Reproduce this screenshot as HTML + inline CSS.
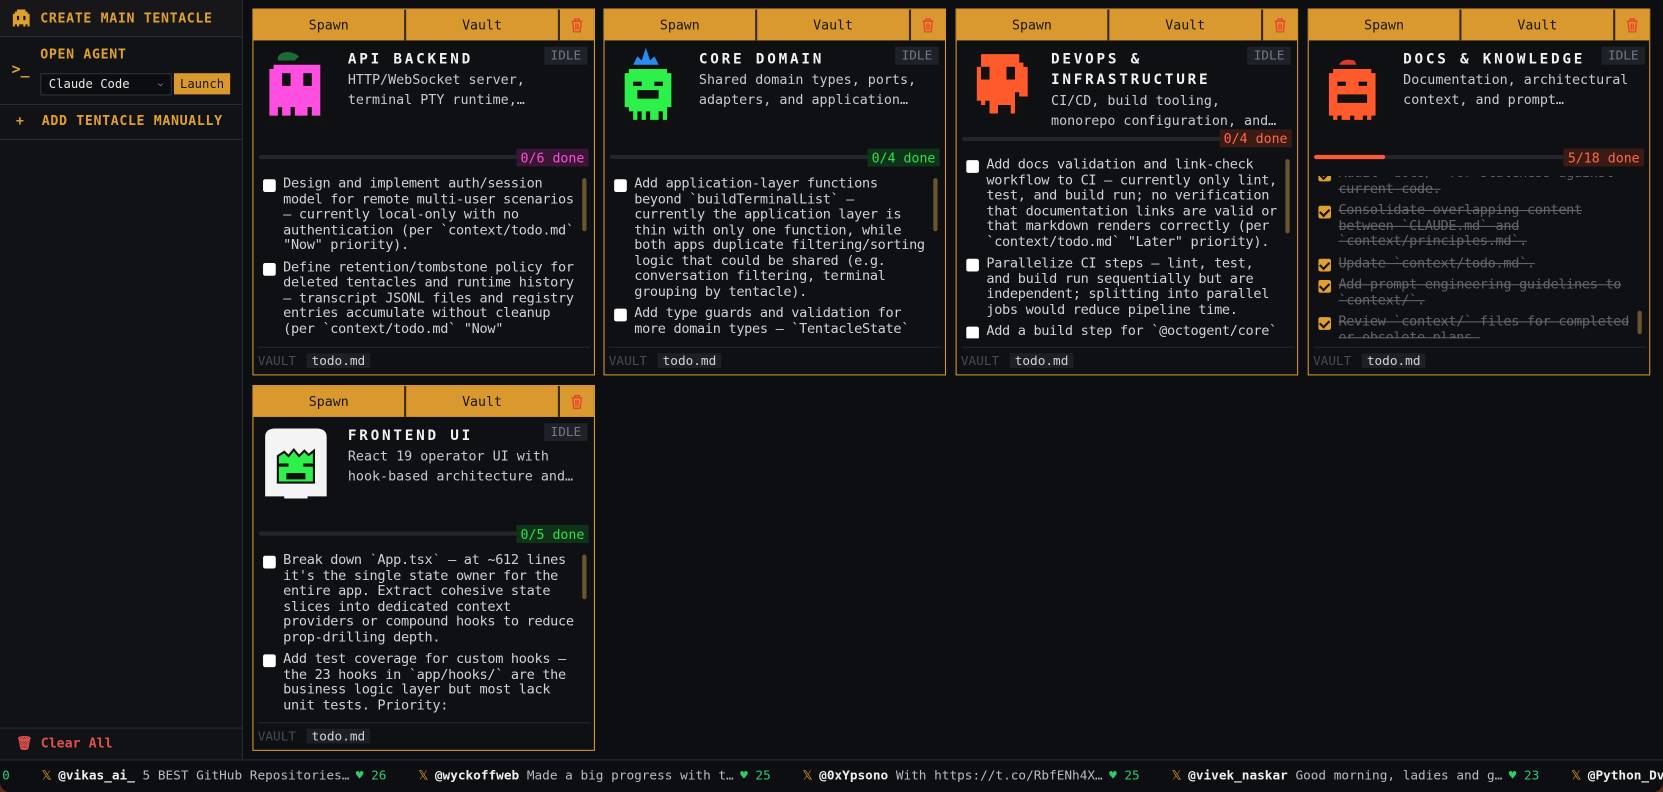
<!DOCTYPE html>
<html><head><meta charset="utf-8"><style>
*{box-sizing:border-box;margin:0;padding:0}
html,body{width:1663px;height:792px;overflow:hidden;background:#5a2a1c}
#w{position:absolute;left:0;top:0;width:1568px;height:747px;transform:scale(1.06058);transform-origin:0 0;background:#0d0e11;font-family:"DejaVu Sans Mono","Liberation Mono",monospace;color:#d0d2d6;overflow:hidden;border-radius:0 0 10px 10px}
.sb{position:absolute;left:0;top:0;width:229px;height:716px;background:#101216;border-right:1px solid #2a2d33}
.or{color:#e0a030;font-weight:bold;font-size:12.5px;letter-spacing:.6px}
.sep{position:absolute;left:0;width:228px;height:1px;background:#2a2d33}
.card{position:absolute;width:323px;border:1px solid #d8982e;background:#0f1014}
.hd{position:absolute;left:0;top:0;right:0;height:29px;background:#d9992f;display:flex;border-bottom:1px solid #d8982e}
.hd div{height:29px;line-height:29px;text-align:center;color:#1a1710;font-size:12.5px}
.hd .a{width:144px;border-right:2px solid #3a2a10}
.hd .b{width:145px;border-right:2px solid #3a2a10}
.hd .c{flex:1;display:flex;align-items:center;justify-content:center}
.sp{position:absolute;left:7px;top:36px}
.tt{position:absolute;left:89px;top:38px;color:#f2f2f2;font-family:"DejaVu Sans Mono",monospace;font-weight:bold;font-size:13.5px;letter-spacing:2.6px;line-height:19px}
.ds{position:absolute;left:89px;font-size:12.6px;line-height:19px;color:#c8cacd;width:228px}
.idle{position:absolute;right:6px;top:35px;background:#1e2228;color:#737982;font-size:12px;padding:1px 6px;line-height:15px}
.pb{position:absolute;left:5px;width:248px;height:4px;background:#22252b;border-radius:2px}
.bd{position:absolute;right:5px;font-size:12.5px;padding:0 4px;line-height:17px}
.ls{position:absolute;left:9px;right:2px;overflow:hidden;font-size:12.8px;letter-spacing:-0.3px;line-height:14.5px;color:#d0d2d6}
.it{display:flex;margin-bottom:6px}
.it>div:last-child{width:280px;flex:none}
.cb{flex:none;width:12px;height:12px;background:#fff;border-radius:2px;margin:2px 7px 0 0}
.ck{flex:none;width:12px;height:12px;background:#e0a030;border-radius:2px;margin:2px 7px 0 0;position:relative}
.ck:after{content:"";position:absolute;left:3px;top:1px;width:4px;height:7px;border:solid #1a1208;border-width:0 2px 2px 0;transform:rotate(45deg)}
.dn{color:#62666c;text-decoration:line-through}
.scr{position:absolute;right:7px;width:4px;border-radius:2px;background:#6b5530}
.ft{position:absolute;left:4px;right:4px;border-top:1px solid #24272c}
.ft span{display:inline-block;font-size:12px;margin-top:5px}
.tk{position:absolute;left:0;top:716px;width:1568px;height:31px;border-top:1px solid #2a2d33;background:#0d0e11;font-size:12px;white-space:nowrap;line-height:29px;color:#b8bcc2}
.tk b{color:#f0f0f0}
.x{color:#e0a030;margin:0 6px 0 30px}
.h{color:#2ecc71;margin-left:6px}
</style></head><body><div id="w">

<div class="sb">
  <div style="position:absolute;left:0;top:0;width:228px;height:34px;background:#17171a"></div>
  <svg style="position:absolute;left:12px;top:9px" width="16" height="16" viewBox="0 0 8 8"><path fill="#e0a030" d="M2 0h4v1h1v1h1v6H7V7H6v1H5V7H3v1H2V7H1v1H0V2h1V1h1z"/><rect x="2" y="3" width="1" height="2" fill="#17171a"/><rect x="5" y="3" width="1" height="2" fill="#17171a"/></svg>
  <div class="or" style="position:absolute;left:38px;top:9px">CREATE MAIN TENTACLE</div>
  <div class="sep" style="top:34px"></div>
  <div class="or" style="position:absolute;left:38px;top:43px">OPEN AGENT</div>
  <div style="position:absolute;left:11px;top:58px;color:#e0a030;font-size:14px;font-weight:bold">&gt;_</div>
  <div style="position:absolute;left:38px;top:69px;width:124px;height:21px;border:1px solid #2e3238;background:#0c0d10;color:#e8e8e8;font-size:11.5px;line-height:19px;padding-left:7px">Claude Code<span style="position:absolute;right:7px;top:0;font-size:9px;color:#aaa">&#x2335;</span></div>
  <div style="position:absolute;left:164px;top:69px;width:53px;height:20px;background:#d9992f;color:#1a1710;font-size:11.5px;line-height:20px;text-align:center">Launch</div>
  <div class="sep" style="top:98px"></div>
  <div class="or" style="position:absolute;left:15px;top:106px">+&nbsp;&nbsp;ADD TENTACLE MANUALLY</div>
  <div class="sep" style="top:131px"></div>
  <div class="sep" style="top:686px"></div>
  <div style="position:absolute;left:15px;top:693px;color:#e0504c;font-size:12.5px;font-weight:bold">&#x1F5D1;&#xFE0E; Clear All</div>
</div>

<!-- card 1 -->
<div class="card" style="left:238px;top:8px;height:346px">
  <div class="hd"><div class="a">Spawn</div><div class="b">Vault</div><div class="c"><svg width="12" height="14" viewBox="0 0 12 14"><path d="M1 3h10M4 3V1h4v2M2 3l1 10h6l1-10M5 5v6M7 5v6" stroke="#e8482c" stroke-width="1.4" fill="none"/></svg></div></div>
  <svg class="sp" width="68" height="80" viewBox="0 0 17 20"><path d="M4 2q2-2 5 0l-1 1H4z" fill="#1e6b3a"/><path fill="#111" d="M2 3h13v15h-3v-2h-1v2H8v-2H7v2H5v-2H4v2H1V4h1z"/><path fill="#ff4fe0" d="M3 4h11v12h-2v-2h-1v2H8v-2H7v2H5v-2H4v2H2V5h1z"/><rect x="5" y="6" width="2" height="3" fill="#111"/><rect x="10" y="6" width="2" height="3" fill="#111"/></svg>
  <div class="tt">API BACKEND</div>
  <div class="idle">IDLE</div>
  <div class="ds" style="top:56px">HTTP/WebSocket server,<br>terminal PTY runtime,…</div>
  <div class="pb" style="top:137px"></div>
  <div class="bd" style="top:131px;color:#ff4fd8;background:#3a1636">0/6 done</div>
  <div class="ls" style="top:158px;height:150px">
    <div class="it"><div class="cb"></div><div>Design and implement auth/session model for remote multi-user scenarios — currently local-only with no authentication (per `context/todo.md` "Now" priority).</div></div>
    <div class="it"><div class="cb"></div><div>Define retention/tombstone policy for deleted tentacles and runtime history — transcript JSONL files and registry entries accumulate without cleanup (per `context/todo.md` "Now" priority).</div></div>
  </div>
  <div class="scr" style="top:159px;height:50px"></div>
  <div class="ft" style="top:318px"><span style="color:#474b52">VAULT</span> <span style="background:#1c1f24;padding:0 5px;color:#d0d2d6">todo.md</span></div>
</div>

<!-- card 2 -->
<div class="card" style="left:569px;top:8px;height:346px">
  <div class="hd"><div class="a">Spawn</div><div class="b">Vault</div><div class="c"><svg width="12" height="14" viewBox="0 0 12 14"><path d="M1 3h10M4 3V1h4v2M2 3l1 10h6l1-10M5 5v6M7 5v6" stroke="#e8482c" stroke-width="1.4" fill="none"/></svg></div></div>
  <svg class="sp" width="68" height="80" viewBox="0 0 17 20"><path d="M5 4l1-2 1 1 1-3 1 3 1-1 1 2 1 1H4z" fill="#2a8cf0"/><path fill="#111" d="M3 4h11v1h1v10h-1v4h-2v-2h-1v2H6v-2H5v2H3v-4H2V5h1z"/><path fill="#2ef04a" d="M4 5h9v1h1v8h-1v3h-1v-2h-1v2H9v-2H8v2H7v-2H6v2H5v-2H4v-1H3V6h1z"/><rect x="5" y="8" width="2" height="1" fill="#111"/><rect x="10" y="8" width="2" height="1" fill="#111"/><rect x="6" y="10" width="5" height="2" fill="#111"/></svg>
  <div class="tt">CORE DOMAIN</div>
  <div class="idle">IDLE</div>
  <div class="ds" style="top:56px">Shared domain types, ports,<br>adapters, and application…</div>
  <div class="pb" style="top:137px"></div>
  <div class="bd" style="top:131px;color:#30e050;background:#0f3318">0/4 done</div>
  <div class="ls" style="top:158px;height:150px">
    <div class="it"><div class="cb"></div><div>Add application-layer functions beyond `buildTerminalList` — currently the application layer is thin with only one function, while both apps duplicate filtering/sorting logic that could be shared (e.g. conversation filtering, terminal grouping by tentacle).</div></div>
    <div class="it"><div class="cb"></div><div>Add type guards and validation for more domain types — `TentacleState`</div></div>
  </div>
  <div class="scr" style="top:159px;height:50px"></div>
  <div class="ft" style="top:318px"><span style="color:#474b52">VAULT</span> <span style="background:#1c1f24;padding:0 5px;color:#d0d2d6">todo.md</span></div>
</div>

<!-- card 3 -->
<div class="card" style="left:901px;top:8px;height:346px">
  <div class="hd"><div class="a">Spawn</div><div class="b">Vault</div><div class="c"><svg width="12" height="14" viewBox="0 0 12 14"><path d="M1 3h10M4 3V1h4v2M2 3l1 10h6l1-10M5 5v6M7 5v6" stroke="#e8482c" stroke-width="1.4" fill="none"/></svg></div></div>
  <svg class="sp" style="top:34px" width="68" height="72" viewBox="0 0 17 18"><path fill="#111" d="M3 1h11v1h1v2h1v9h-2v2h1v2h-3v-2h-1v2h-2v-2H8v2H5v-2h1v-2H3v-1H2V4h1z"/><path fill="#ff5a2c" d="M4 2h9v2h1v1h1v7h-2v-1h-1v5h-1v-2H8v2H6v-3H5v1H4v-1H3V5h1z"/><rect x="4" y="5" width="2" height="3" fill="#111"/><rect x="10" y="5" width="2" height="3" fill="#111"/></svg>
  <div class="tt">DEVOPS &amp;<br>INFRASTRUCTURE</div>
  <div class="idle">IDLE</div>
  <div class="ds" style="top:76px">CI/CD, build tooling,<br>monorepo configuration, and…</div>
  <div class="pb" style="top:120px"></div>
  <div class="bd" style="top:113px;color:#ff6a4a;background:#3a1a14">0/4 done</div>
  <div class="ls" style="top:140px;height:170px">
    <div class="it"><div class="cb"></div><div>Add docs validation and link-check workflow to CI — currently only lint, test, and build run; no verification that documentation links are valid or that markdown renders correctly (per `context/todo.md` "Later" priority).</div></div>
    <div class="it"><div class="cb"></div><div>Parallelize CI steps — lint, test, and build run sequentially but are independent; splitting into parallel jobs would reduce pipeline time.</div></div>
    <div class="it"><div class="cb"></div><div>Add a build step for `@octogent/core`</div></div>
  </div>
  <div class="scr" style="top:141px;height:70px"></div>
  <div class="ft" style="top:318px"><span style="color:#474b52">VAULT</span> <span style="background:#1c1f24;padding:0 5px;color:#d0d2d6">todo.md</span></div>
</div>

<!-- card 4 -->
<div class="card" style="left:1233px;top:8px;height:346px">
  <div class="hd"><div class="a">Spawn</div><div class="b">Vault</div><div class="c"><svg width="12" height="14" viewBox="0 0 12 14"><path d="M1 3h10M4 3V1h4v2M2 3l1 10h6l1-10M5 5v6M7 5v6" stroke="#e8482c" stroke-width="1.4" fill="none"/></svg></div></div>
  <svg class="sp" style="top:40px" width="68" height="72" viewBox="0 0 17 18"><path d="M5 5q0-4 4-3l1 2H6z" fill="#d83a2c"/><path fill="#111" d="M3 3h10v1h1v1h1v11h-1v1H3v-1H2V4h1z"/><path fill="#ff5a2c" d="M4 4h9v1h1v10h-1v1h-1v-1h-1v1H9v-1H8v1H6v-1H5v1H4v-1H3V5h1z"/><rect x="5" y="7" width="2" height="1" fill="#111"/><rect x="10" y="7" width="2" height="1" fill="#111"/><rect x="5" y="10" width="7" height="2" fill="#111"/></svg>
  <div class="tt">DOCS &amp; KNOWLEDGE</div>
  <div class="idle" style="right:4px">IDLE</div>
  <div class="ds" style="top:56px">Documentation, architectural<br>context, and prompt…</div>
  <div class="pb" style="top:137px"></div>
  <div class="pb" style="top:137px;width:67px;background:#ff5a36"></div>
  <div class="bd" style="top:131px;color:#ff6a4a;background:#3a1a14">5/18 done</div>
  <div class="ls" style="top:157px;height:153px">
    <div style="margin-top:-9px">
    <div class="it"><div class="ck"></div><div class="dn">Audit `docs/` for staleness against current code.</div></div>
    <div class="it"><div class="ck"></div><div class="dn">Consolidate overlapping content between `CLAUDE.md` and `context/principles.md`.</div></div>
    <div class="it"><div class="ck"></div><div class="dn">Update `context/todo.md`.</div></div>
    <div class="it"><div class="ck"></div><div class="dn">Add prompt engineering guidelines to `context/`.</div></div>
    <div class="it"><div class="ck"></div><div class="dn">Review `context/` files for completed or obsolete plans.</div></div>
    </div>
  </div>
  <div class="scr" style="top:284px;height:22px"></div>
  <div class="ft" style="top:318px"><span style="color:#474b52">VAULT</span> <span style="background:#1c1f24;padding:0 5px;color:#d0d2d6">todo.md</span></div>
</div>

<!-- card 5 -->
<div class="card" style="left:238px;top:363px;height:345px">
  <div class="hd"><div class="a">Spawn</div><div class="b">Vault</div><div class="c"><svg width="12" height="14" viewBox="0 0 12 14"><path d="M1 3h10M4 3V1h4v2M2 3l1 10h6l1-10M5 5v6M7 5v6" stroke="#e8482c" stroke-width="1.4" fill="none"/></svg></div></div>
  <svg class="sp" style="top:40px" width="66" height="66" viewBox="0 0 66 66"><path d="M4 8q0-8 10-8h38q10 0 10 8v56H4z" fill="#f4f4f4"/><path d="M16 26l6-4 4 4 5-6 5 6 5-5 4 4 5-4v30H16z" fill="#2ef04a" stroke="#111" stroke-width="2"/><rect x="16" y="33" width="10" height="3" fill="#111"/><rect x="40" y="33" width="10" height="3" fill="#111"/><rect x="24" y="42" width="18" height="6" fill="#111"/><rect x="22" y="56" width="22" height="10" fill="#f4f4f4"/></svg>
  <div class="tt">FRONTEND UI</div>
  <div class="idle">IDLE</div>
  <div class="ds" style="top:56px">React 19 operator UI with<br>hook-based architecture and…</div>
  <div class="pb" style="top:137px"></div>
  <div class="bd" style="top:131px;color:#30e050;background:#0f3318">0/5 done</div>
  <div class="ls" style="top:158px;height:150px">
    <div class="it"><div class="cb"></div><div>Break down `App.tsx` — at ~612 lines it's the single state owner for the entire app. Extract cohesive state slices into dedicated context providers or compound hooks to reduce prop-drilling depth.</div></div>
    <div class="it"><div class="cb"></div><div>Add test coverage for custom hooks — the 23 hooks in `app/hooks/` are the business logic layer but most lack unit tests. Priority: `useTerminalMutations`</div></div>
  </div>
  <div class="scr" style="top:159px;height:42px"></div>
  <div class="ft" style="top:317px"><span style="color:#474b52">VAULT</span> <span style="background:#1c1f24;padding:0 5px;color:#d0d2d6">todo.md</span></div>
</div>

<div class="tk"><span style="color:#2ecc71;margin-left:2px">0</span><span class="x">𝕏</span><b>@vikas_ai_</b> 5 BEST GitHub Repositories…<span class="h">♥ 26</span><span class="x">𝕏</span><b>@wyckoffweb</b> Made a big progress with t…<span class="h">♥ 25</span><span class="x">𝕏</span><b>@0xYpsono</b> With https://t.co/RbfENh4X…<span class="h">♥ 25</span><span class="x">𝕏</span><b>@vivek_naskar</b> Good morning, ladies and g…<span class="h">♥ 23</span><span class="x">𝕏</span><b>@Python_Dv</b></div>
</div></body></html>
